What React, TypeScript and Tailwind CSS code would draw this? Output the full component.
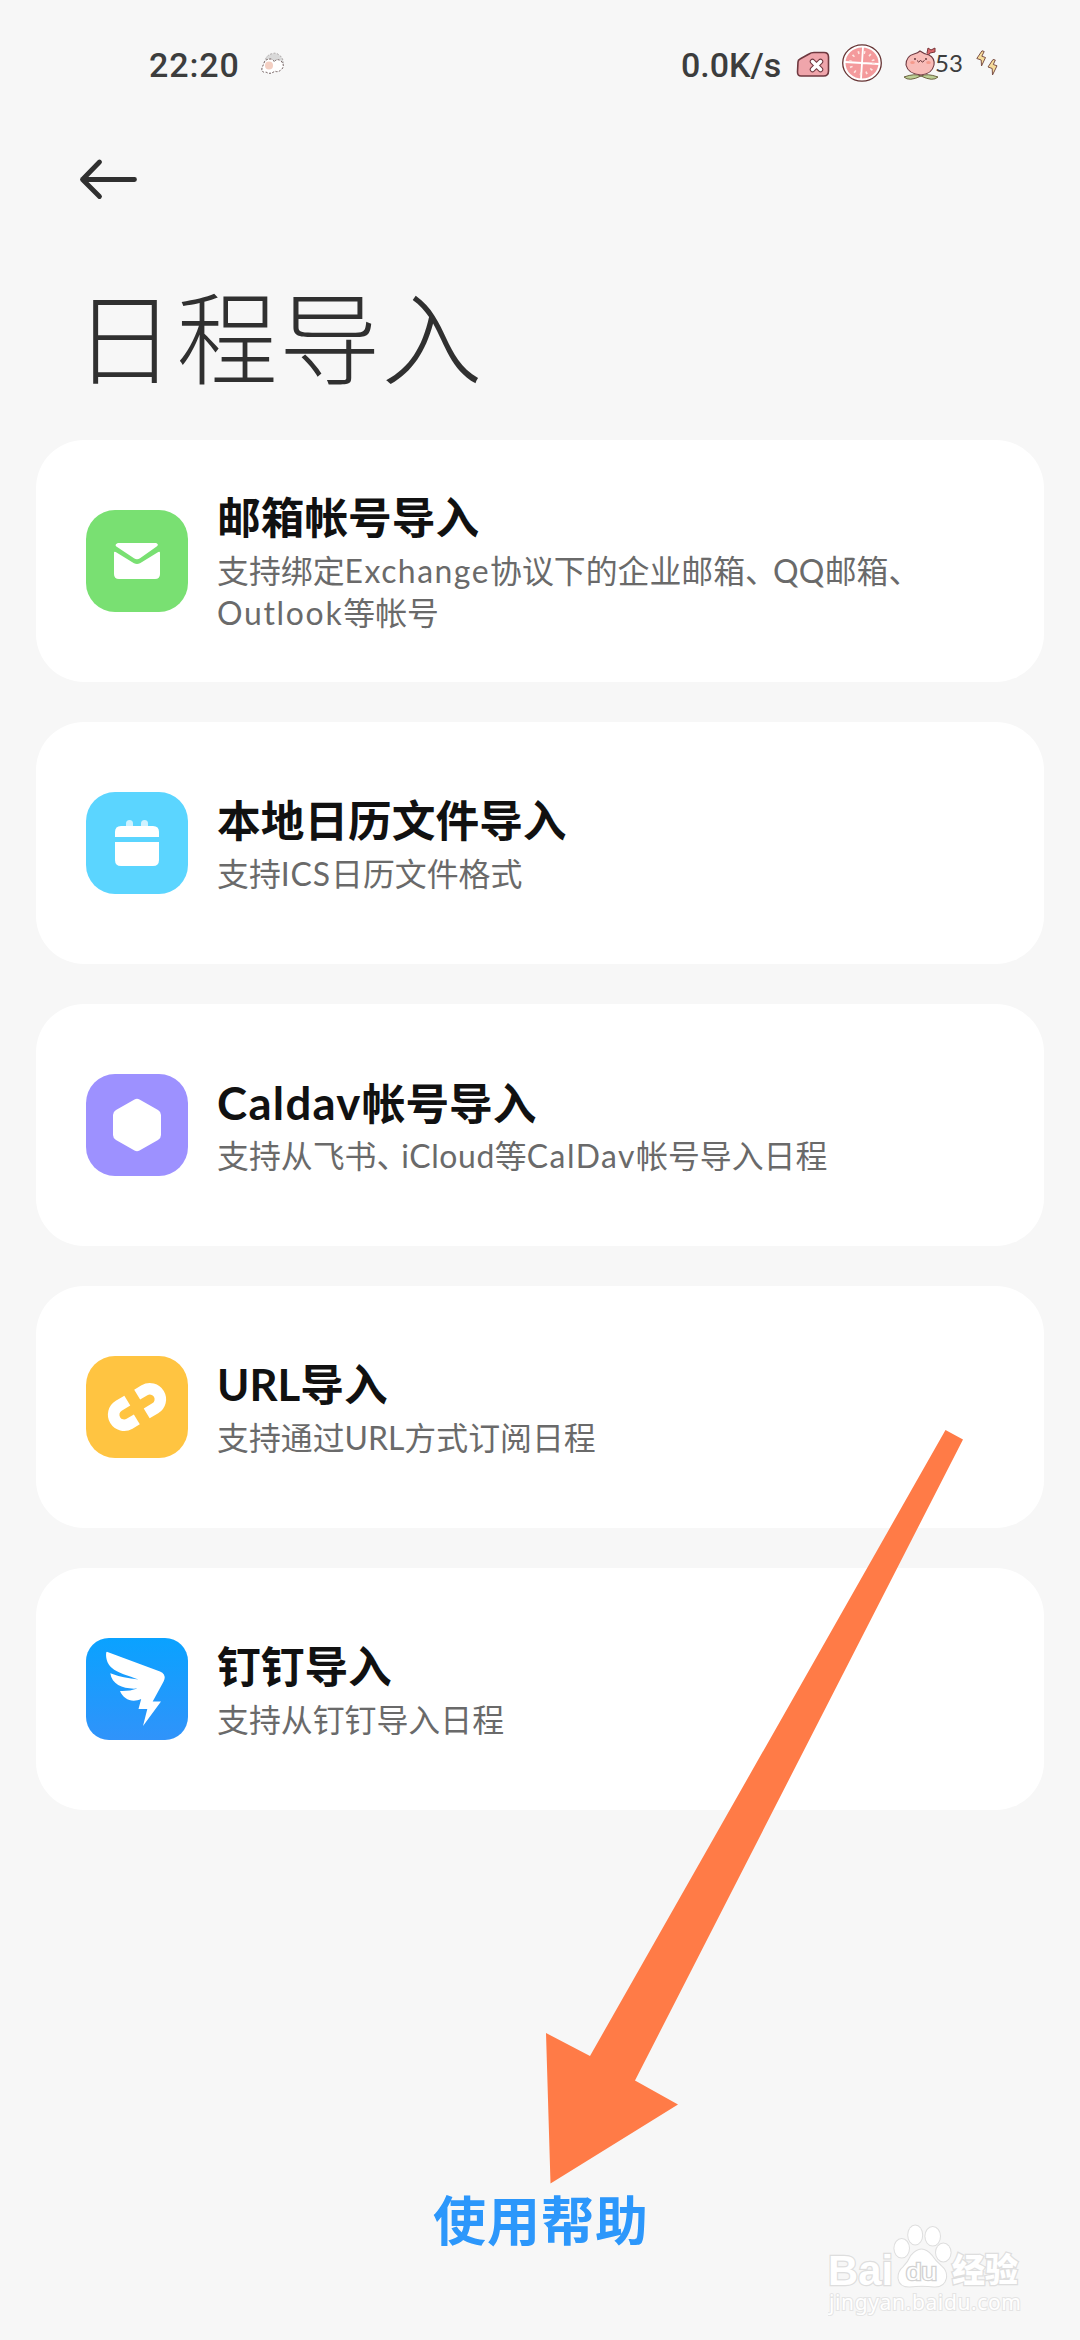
import type { ReactNode } from 'react'

const tile = 'size-[102px] shrink-0'

const MailIcon = () => (
  <svg viewBox="0 0 102 102" className={tile}>
    <rect width="102" height="102" rx="29" fill="#79e072" />
    <path d="M33 33h36c2.500 0 3.800 1.800 2 3.200L54 48.200q-3 2.200-6 0L30 36.200c-1-1.400.5-3.200 3-3.200z" fill="#fff" />
    <path d="M28 43q0-2 1.700-1L48 53.300q3 1.600 6 0L72.300 42q1.700-1 1.700 1v21q0 5-5 5H33q-5 0-5-5z" fill="#fff" />
  </svg>
)

const CalendarIcon = () => (
  <svg viewBox="0 0 102 102" className={tile}>
    <rect width="102" height="102" rx="29" fill="#5bd5ff" />
    <rect x="40" y="28" width="7" height="10" rx="3.500" fill="#d0f2ff" />
    <rect x="55" y="28" width="7" height="10" rx="3.500" fill="#d0f2ff" />
    <path d="M29 45v-5q0-6 6-6h32q6 0 6 6v5z" fill="#fff" />
    <path d="M29 50h44v18q0 6-6 6H35q-6 0-6-6z" fill="#fff" />
  </svg>
)

const HexIcon = () => (
  <svg viewBox="0 0 102 102" className={tile}>
    <rect width="102" height="102" rx="29" fill="#9d91ff" />
    <path d="M48.500 25.500q2.500-1.500 5 0l18.500 10.500q3 1.800 3 5v20q0 3.200-3 5L53.500 76.500q-2.500 1.500-5 0L30 66q-3-1.800-3-5v-20q0-3.200 3-5z" fill="#fff" />
  </svg>
)

const LinkIcon = () => (
  <svg viewBox="0 0 102 102" className={tile}>
    <rect width="102" height="102" rx="29" fill="#ffc441" />
    <g transform="rotate(-31 51 51)" fill="none" stroke="#fff" strokeWidth="11.500">
      <path d="M46 40.500h-10a10.500 10.500 0 0 0 0 21h8.500" />
      <path d="M57.500 40.500h8.500a10.500 10.500 0 0 1 0 21h-10" />
    </g>
  </svg>
)

const WingIcon = () => (
  <svg viewBox="0 0 102 102" className={tile}>
    <defs>
      <linearGradient id="wing-bg" x1="0" y1="0" x2="0" y2="1">
        <stop offset="0" stopColor="#0aa2ff" />
        <stop offset="1" stopColor="#3093fa" />
      </linearGradient>
    </defs>
    <rect width="102" height="102" rx="23" fill="url(#wing-bg)" />
    <path
      fill="#fff"
      d="M21.500 14L74 33.500q5.500 2.300 4.500 7.500-.5 2-2 4.500L66.700 63.500H75L57 88l4.300-17H52.500l2.700-10C46 65 37.500 61.500 34 53q9 .5 17.500-2.500C38 51.500 26 47 24.300 35.300q13 5 28.200 6.200C43 38 31 34.500 26 30 20.500 26 19.500 18 20.300 14.300q.5-.8 1.200-.3z"
    />
  </svg>
)

type Row = { icon: ReactNode; title: ReactNode; lines: ReactNode[] }

const rows: Row[] = [
  {
    icon: <MailIcon />,
    title: '邮箱帐号导入',
    lines: [
      <>支持绑定<span className="tracking-[1.500px]">Exchange</span>协议下的企业邮箱<span className="-mr-[4px]">、</span><span className="tracking-[0.300px]">QQ</span>邮箱、</>,
      <><span className="tracking-[1.700px]">Outlook</span>等帐号</>,
    ],
  },
  { icon: <CalendarIcon />, title: '本地日历文件导入', lines: [<>支持<span className="tracking-[0.900px]">ICS</span>日历文件格式</>] },
  {
    icon: <HexIcon />,
    title: <><span className="text-[45.500px] tracking-[1.300px]">Caldav</span>帐号导入</>,
    lines: [
      <>支持从飞书<span className="-mr-[7px]">、</span><span className="tracking-[0.600px]">iCloud</span>等<span className="tracking-[1.500px]">CalDav</span>帐号导入日程</>,
    ],
  },
  { icon: <LinkIcon />, title: 'URL导入', lines: ['支持通过URL方式订阅日程'] },
  { icon: <WingIcon />, title: '钉钉导入', lines: ['支持从钉钉导入日程'] },
]

const StatusBar = () => (
  <header className="flex h-[130px] items-start pt-[42px] text-[#3c3d3d]">
    <span className="ml-[149px] w-[112px] text-[34px] leading-[46px] font-medium tracking-[0.900px] font-['Roboto',sans-serif]">22:20</span>
    <svg viewBox="0 0 24 24" className="mt-[10px] size-6" strokeDasharray="2 1.500">
      <path d="M4 11q0-7 6-9 5-2 8 1 5 3 4 10" fill="#d9d9d9" stroke="#a9a4a4" />
      <path d="M3 11q1-4 7-4 3 1 3 3 3-4 7-1 4 4 1 8-4 4-7 2-5 4-9 1-5 1-4-4z" fill="#fff" stroke="#6d5a5a" />
      <circle cx="8" cy="13.500" r="4" fill="#f3cfc2" />
    </svg>
    <span className="ml-[396px] w-[115px] text-[34px] leading-[46px] font-medium font-['Roboto',sans-serif]">0.0K/s</span>
    <svg viewBox="0 0 34 28" className="mt-[9px] h-7 w-[34px]">
      <path d="M2 11q0-2 2-3l9-5q2-1.500 5-1.500h10q4.500 0 4.500 4.500v14q0 5-5 5H5q-3.500 0-3.500-4z" fill="#efa5ab" stroke="#6f3940" strokeWidth="1.600" />
      <path d="M16.500 10.500l8 8m0-8l-8 8" stroke="#6f3940" strokeWidth="5.500" strokeLinecap="round" />
      <path d="M16.500 10.500l8 8m0-8l-8 8" stroke="#fff" strokeWidth="3.500" strokeLinecap="round" />
    </svg>
    <svg viewBox="0 0 40 38" className="ml-[12px] mt-[2px] h-[38px] w-[40px]">
      <ellipse cx="20" cy="19" rx="19.300" ry="18.200" fill="#fff" stroke="#633" strokeWidth="1.300" />
      <ellipse cx="20" cy="19" rx="16.500" ry="15.500" fill="#f49a9c" />
      <path d="M21 3l-2 32M3 18l34 2" stroke="#fff" strokeWidth="1.800" />
      <ellipse cx="20" cy="19" rx="11.500" ry="10.800" fill="none" stroke="#fde5e0" strokeWidth="2.800" strokeDasharray="1.600 4.400" />
    </svg>
    <svg viewBox="0 0 36 34" className="ml-[21px] mt-[5px] h-[34px] w-[36px]">
      <path d="M18 29Q12 26 1 30q5 5 17-1 12 6 17 1-11-4-17-1z" fill="#bccf94" stroke="#6d6442" />
      <path d="M24 6l1-5 3 2 4-2v4l-5 1-3 4" fill="#d9666b" stroke="#7a3539" />
      <path d="M17 4q4 3 9 4 6 3 5 10-2 9-13 10Q5 27 3 18 3 9 11 7q4-1 6-3z" fill="#f8bcb8" stroke="#6f3940" strokeWidth="1.100" />
      <path d="M14 13.500q1.500 3 3.500 0 2 3 4 0" fill="none" stroke="#5c2c30" strokeWidth="1" />
      <circle cx="12" cy="12" r=".9" fill="#5c2c30" />
      <circle cx="23" cy="12" r=".9" fill="#5c2c30" />
      <ellipse cx="9.500" cy="15.500" rx="2.300" ry="1.600" fill="#f59a8c" />
      <ellipse cx="25.500" cy="15.500" rx="2.300" ry="1.600" fill="#f59a8c" />
    </svg>
    <span className="-ml-[4px] mt-px w-[41px] text-[24px] leading-[40px] font-['Lato',sans-serif] whitespace-nowrap">53</span>
    <svg viewBox="0 0 22 26" className="mt-[8px] h-[26px] w-[22px]" fill="#f6dc9a" stroke="#7c5148" strokeWidth="1" strokeLinejoin="round">
      <path d="M6 .8L.8 8.500l4.400 1.500.3 6L9.500 7.500 5.800 6.200 8.200 1.500z" />
      <path d="M17 9.500l-5 7.500 4.200 1.500.3 6.500L21 15.800l-3.700-1.300 2-4.500z" />
    </svg>
  </header>
)

const Watermark = () => (
  <div className="absolute left-[828px] top-[2222px] h-24 w-[200px]">
    <svg viewBox="0 0 200 96" className="h-24 w-[200px]" fill="#fff" stroke="#dedede" strokeWidth="2" paintOrder="stroke">
      <ellipse cx="73.700" cy="26.300" rx="7.300" ry="9.300" />
      <ellipse cx="87.200" cy="13" rx="7" ry="9.500" />
      <ellipse cx="104.700" cy="14.300" rx="7.300" ry="9.300" />
      <ellipse cx="115.300" cy="30.500" rx="7.300" ry="9" />
      <path d="M83 34q10.500-13 21 0 3 5 9 10 6 5 5 12-2 9-12 8.500-12-1.500-24 0-10 .5-11.500-8-.5-7 5-11.500 5-5 7.500-11z" />
      <g fontFamily="Liberation Sans" fontWeight="700" strokeWidth="2.500">
        <text x="0" y="62.500" fontSize="43" textLength="65" lengthAdjust="spacingAndGlyphs">Bai</text>
        <text x="78" y="58" fontSize="24" fontWeight="400" stroke="#d2d2d2" textLength="31" lengthAdjust="spacingAndGlyphs">du</text>
        <text x="124" y="60" fontSize="33" fontFamily="Noto Sans CJK SC" fontWeight="900" textLength="66">经验</text>
        <text x="1" y="88" fontSize="21" fontFamily="Noto Sans" fontWeight="400" stroke="#e4e4e4" strokeWidth="2" textLength="192">jingyan.baidu.com</text>
      </g>
    </svg>
  </div>
)

export default function App() {
  return (
    <div className="relative flex h-[2340px] w-[1080px] flex-col overflow-hidden bg-[#f7f7f7] font-['Lato','Noto_Sans_CJK_SC',sans-serif]">
      <StatusBar />
      <button className="ml-[78px] mt-[28px] block h-[42px] w-[60px]" aria-label="返回">
        <svg viewBox="0 0 60 42" className="h-[42px] w-[60px]" fill="none" stroke="#303030" strokeWidth="4.800" strokeLinecap="round" strokeLinejoin="round">
          <path d="M4.500 21.500h52M21.500 4l-17 17.500 17 17" />
        </svg>
      </button>
      <h1 className="ml-[74px] mt-[67px] h-[145px] text-[101px] leading-[142px] font-light tracking-[1.500px] whitespace-nowrap text-[#303030]">日程导入</h1>
      <main className="mx-9 mt-[28px] flex flex-col gap-10">
        {rows.map((row, i) => (
          <section key={i} className="flex h-[242px] items-center rounded-[48px] bg-white pl-[50px]">
            {row.icon}
            <div className="ml-[29px] whitespace-nowrap">
              <h2 className="-mt-px mb-px h-[62px] text-[43.700px] leading-[61px] font-bold text-[#111]">{row.title}</h2>
              {row.lines.map((line, j) => (
                <p key={j} className="h-[42px] text-[31.900px] leading-[43px] text-[#6a6a6a]">{line}</p>
              ))}
            </div>
          </section>
        ))}
      </main>
      <button className="mx-auto mt-[370px] block h-[80px] pl-[2px] text-[53px] leading-[81px] font-bold tracking-[1px] text-[#2c97fb]">使用帮助</button>
      <svg viewBox="0 0 440 760" className="absolute left-[540px] top-[1425px] h-[760px] w-[440px]" fill="#ff7b47">
        <path d="M405.500 5L423 14.500 95 655.500 138 679.500 10.500 758.500 6 608 50 631z" />
      </svg>
      <Watermark />
    </div>
  )
}
